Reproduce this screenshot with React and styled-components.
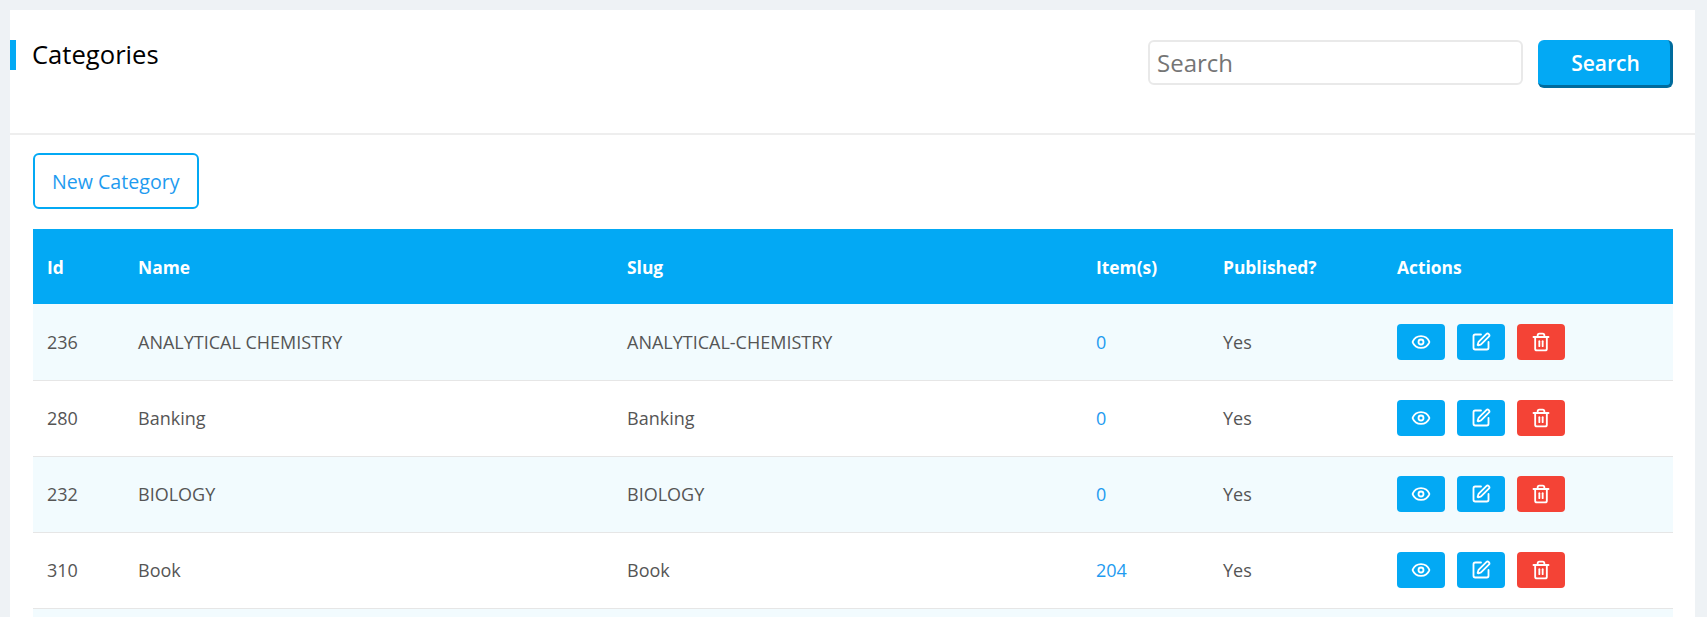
import styled, { createGlobalStyle } from "styled-components";
import { Eye, SquarePen, Trash2 } from "lucide-react";

const GlobalStyle = createGlobalStyle`
  html, body {
    margin: 0;
    height: 100%;
    overflow: hidden;
    background: #eef2f5;
  }

  body {
    font-family: "Open Sans", sans-serif;
    font-size: 18px;
    color: #555;
  }
`

const Page = styled.div`
  padding: 10px 12px 0 10px;
`

const Card = styled.section`
  background: #fff;
`

const CardHeader = styled.header`
  display: flex;
  justify-content: space-between;
  align-items: flex-start;
  height: 93px;
  padding: 30px 22px 0 0;
  border-bottom: 2px solid #eeeeee;
`

const Title = styled.h1`
  margin: 0;
  height: 30px;
  padding-left: 16px;
  border-left: 6px solid #03a9f4;
  font-size: 25.6px;
  font-weight: 400;
  line-height: 30px;
  color: #000;
`

const SearchForm = styled.form`
  display: flex;
  align-items: flex-start;
  gap: 15px;
`

const SearchInput = styled.input`
  box-sizing: border-box;
  width: 375px;
  height: 45px;
  padding: 0 7px;
  border: 2px solid #e9e9e9;
  border-radius: 6px;
  font-family: inherit;
  font-size: 24px;
  outline: none;

  &::placeholder {
    color: #757575;
    opacity: 1;
  }
`

const SearchButton = styled.button`
  box-sizing: border-box;
  width: 135px;
  height: 48px;
  padding: 0 0 0 3px;
  border: 0;
  border-right: 3px solid #006b9d;
  border-bottom: 3px solid #006b9d;
  border-radius: 6px;
  background: #03a9f4;
  font-family: inherit;
  font-size: 21px;
  font-weight: 600;
  color: #fff;
`

const CardBody = styled.div`
  padding: 18px 22px 0 23px;
`

const NewButton = styled.a`
  display: inline-flex;
  align-items: center;
  box-sizing: border-box;
  height: 56px;
  padding: 0 17px;
  border: 2px solid #03a9f4;
  border-radius: 6px;
  font-size: 19.6px;
  color: #1e9bf0;
`

const Table = styled.table`
  width: 100%;
  margin-top: 20px;
  border-collapse: collapse;
  table-layout: fixed;
`

const HeadCell = styled.th`
  height: 75px;
  padding: 0 14px;
  background: #03a9f4;
  font-size: 17.4px;
  font-weight: 700;
  text-align: left;
  color: #fff;
`

const Row = styled.tr`
  height: 76px;
  background: ${(props) => (props.$tinted ? "#f2fbfe" : "#fff")};
  border-bottom: 1px solid #e6e6e6;
`

const Cell = styled.td`
  padding: 0 14px;
  font-size: 18px;
`

const ItemLink = styled.a`
  color: #1e9bf0;
`

const Actions = styled.div`
  display: flex;
  gap: 12px;
`

const ActionButton = styled.button`
  display: flex;
  align-items: center;
  justify-content: center;
  width: 48px;
  height: 36px;
  padding: 0;
  border: 0;
  border-radius: 4px;
  background: ${(props) => (props.$danger ? "#f44336" : "#03a9f4")};
  color: #fff;

  svg {
    width: 20px;
    height: 20px;
    stroke-width: 2.2;
  }
`

const columns = [
  { label: "Id", width: 91 },
  { label: "Name", width: 489 },
  { label: "Slug", width: 469 },
  { label: "Item(s)", width: 127 },
  { label: "Published?", width: 174 },
  { label: "Actions" },
];

const categories = [
  { id: 236, name: "ANALYTICAL CHEMISTRY", slug: "ANALYTICAL-CHEMISTRY", items: 0 },
  { id: 280, name: "Banking", slug: "Banking", items: 0 },
  { id: 232, name: "BIOLOGY", slug: "BIOLOGY", items: 0 },
  { id: 310, name: "Book", slug: "Book", items: 204 },
];

function App() {
  return (
    <Page>
      <GlobalStyle />
      <Card>
        <CardHeader>
          <Title>Categories</Title>
          <SearchForm>
            <SearchInput placeholder="Search" />
            <SearchButton type="button">Search</SearchButton>
          </SearchForm>
        </CardHeader>
        <CardBody>
          <NewButton>New Category</NewButton>
          <Table>
            <colgroup>
              {columns.map((col) => (
                <col key={col.label} style={{ width: col.width }} />
              ))}
            </colgroup>
            <thead>
              <tr>
                {columns.map((col) => (
                  <HeadCell key={col.label}>{col.label}</HeadCell>
                ))}
              </tr>
            </thead>
            <tbody>
              {categories.map((cat, i) => (
                <Row key={cat.id} $tinted={i % 2 === 0}>
                  <Cell>{cat.id}</Cell>
                  <Cell>{cat.name}</Cell>
                  <Cell>{cat.slug}</Cell>
                  <Cell>
                    <ItemLink>{cat.items}</ItemLink>
                  </Cell>
                  <Cell>Yes</Cell>
                  <Cell>
                    <Actions>
                      <ActionButton><Eye /></ActionButton>
                      <ActionButton><SquarePen /></ActionButton>
                      <ActionButton $danger><Trash2 /></ActionButton>
                    </Actions>
                  </Cell>
                </Row>
              ))}
              <Row $tinted>
                <Cell colSpan={6} />
              </Row>
            </tbody>
          </Table>
        </CardBody>
      </Card>
    </Page>
  );
}

export default App;
